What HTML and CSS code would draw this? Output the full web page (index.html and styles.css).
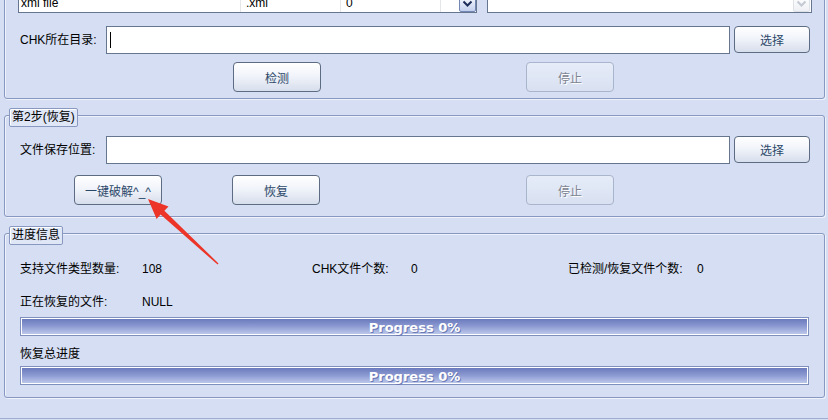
FILE: index.html
```html
<!DOCTYPE html>
<html lang="zh-CN">
<head>
    <meta charset="UTF-8">
    <title>CHK恢复</title>
    <link rel="stylesheet" href="styles.css">
</head>
<body>
    <div class="window">
        <!-- 第1步 (顶部被截掉) -->
        <section class="group group-scan">
            <div class="filelist-row">
                <div class="filelist">
                    <span class="cell c-name">xml file</span>
                    <span class="cell c-ext">.xml</span>
                    <span class="cell c-num">0</span>
                    <span class="cell c-drop">
                        <span class="drop-btn">
                            <svg width="15" height="15" viewBox="0 0 15 15"><path d="M3.5 5.5 L7.5 9.5 L11.5 5.5" fill="none" stroke="#1d2d5a" stroke-width="2"/></svg>
                        </span>
                    </span>
                </div>
                <div class="combo">
                    <span class="drop-btn disabled">
                        <svg width="15" height="15" viewBox="0 0 15 15"><path d="M3.5 5.5 L7.5 9.5 L11.5 5.5" fill="none" stroke="#c4c9d4" stroke-width="2"/></svg>
                    </span>
                </div>
            </div>
            <div class="path-row">
                <span class="label">CHK所在目录:</span>
                <div class="input"><span class="caret"></span></div>
                <button class="btn">选择</button>
            </div>
            <div class="action-row scan-actions">
                <button class="btn wide">检测</button>
                <button class="btn wide" disabled>停止</button>
            </div>
        </section>

        <section class="group group-restore">
            <span class="legend">第2步(恢复)</span>
            <div class="path-row">
                <span class="label">文件保存位置:</span>
                <div class="input"></div>
                <button class="btn">选择</button>
            </div>
            <div class="action-row restore-actions">
                <button class="btn wide">一键破解^_^</button>
                <button class="btn wide">恢复</button>
                <button class="btn wide" disabled>停止</button>
            </div>
        </section>

        <section class="group group-progress">
            <span class="legend">进度信息</span>
            <div class="stats">
                <span>支持文件类型数量:</span>
                <span>108</span>
                <span>CHK文件个数:</span>
                <span>0</span>
                <span>已检测/恢复文件个数:</span>
                <span>0</span>
            </div>
            <div class="current-file">
                <span>正在恢复的文件:</span>
                <span>NULL</span>
            </div>
            <div class="progress first-bar"><span>Progress 0%</span></div>
            <div class="progress-label">恢复总进度</div>
            <div class="progress"><span>Progress 0%</span></div>
        </section>

        <div class="footer"></div>
    </div>

    <!-- 红色箭头标注 -->
    <svg class="annotation" width="828" height="420" viewBox="0 0 828 420">
        <polygon points="148,199 168.5,206.5 164.4,210.8 218.5,263.4 217.6,264.6 160.6,214.6 156.6,219" fill="#ec3528"/>
    </svg>
</body>
</html>
```

FILE: styles.css
```css
body {
    margin: 0;
    background-color: #d5def2;
    font-family: "Liberation Sans", "Noto Sans CJK SC", sans-serif;
    font-size: 12px;
    color: #000;
    overflow: hidden;
    height: 420px;
}

.window {
    position: relative;
    padding-left: 4px;
    width: 821px;
}

.group {
    position: relative;
    border: 1px solid #8898c0;
    border-radius: 3px;
    box-shadow: inset 1px 1px 0 #eef2fb, 1px 1px 0 #eef2fb;
}

.group-scan {
    margin-top: -24px;
    padding: 17px 0 6px 0;
}

.group-restore {
    margin-top: 16px;
    padding: 20px 0 11px 0;
}

.group-progress {
    margin-top: 16px;
    padding: 27px 0 12px 0;
}

.legend {
    position: absolute;
    top: -8px;
    left: 4px;
    height: 17px;
    line-height: 17px;
    padding: 0 2px;
    border: 1px solid #8898c0;
    border-radius: 2px;
    background-color: #dfe6f6;
    box-shadow: inset 1px 1px 0 #fff;
}

/* 文件类型列表 */
.filelist-row {
    display: flex;
    margin-left: 13px;
}

.filelist {
    display: flex;
    width: 457px;
    height: 17px;
    border: 1px solid #66768f;
    background-color: #fff;
}

.cell {
    line-height: 17px;
    border-right: 1px solid #e4e6ea;
    box-sizing: border-box;
}

.c-name {
    width: 222px;
    padding-left: 2px;
}

.c-ext {
    width: 100px;
    padding-left: 5px;
}

.c-num {
    width: 100px;
    padding-left: 5px;
}

.c-drop {
    flex: 1;
    border-right: none;
    display: flex;
    justify-content: flex-end;
}

.combo {
    margin-left: 10px;
    width: 322px;
    height: 17px;
    border: 1px solid #66768f;
    background-color: #fff;
    display: flex;
    justify-content: flex-end;
    padding-right: 1px;
}

.drop-btn {
    width: 15px;
    height: 15px;
    border: 1px solid #7387b5;
    border-radius: 2px;
    background: linear-gradient(#fbfcff, #c3d0ee);
    display: block;
}

.drop-btn svg {
    display: block;
}

.drop-btn.disabled {
    border-color: #dde1e8;
    background: linear-gradient(#fff, #eef0f4);
}

/* 路径输入行 */
.path-row {
    display: grid;
    grid-template-columns: 86px 624px 80px;
    column-gap: 0;
    align-items: start;
    padding-left: 15px;
}

.group-scan .path-row {
    margin-top: 13px;
}

.label {
    line-height: 28px;
}

.input {
    height: 26px;
    border: 1px solid #66768f;
    background-color: #fff;
    display: flex;
    align-items: center;
}

.path-row .btn {
    margin-left: 4px;
}

.caret {
    width: 1px;
    height: 16px;
    margin-left: 3px;
    background-color: #000;
}

.btn {
    height: 27px;
    padding: 0;
    border: 1px solid #5d6c82;
    border-radius: 4px;
    background: linear-gradient(#ffffff, #f1f4fa 45%, #d7deec);
    font-family: inherit;
    font-size: 12px;
    color: #2c4869;
}

.btn.wide {
    width: 88px;
    height: 30px;
}

.btn:disabled {
    border-color: #a9b5cc;
    background: linear-gradient(#e6ecf8, #d8e0f1);
    color: #7d8391;
    text-shadow: 1px 1px 0 #fff;
}

.action-row {
    display: flex;
}

.scan-actions {
    margin-top: 8px;
    padding-left: 228px;
}

.scan-actions .btn + .btn {
    margin-left: 205px;
}

.restore-actions {
    margin-top: 11px;
    padding-left: 69px;
}

.restore-actions .btn:nth-child(2) {
    margin-left: 70px;
}

.restore-actions .btn:nth-child(3) {
    margin-left: 206px;
}

/* 进度信息 */
.stats {
    display: grid;
    grid-template-columns: 122px 170px 99px 157px 129px auto;
    padding-left: 15px;
    line-height: 17px;
}

.current-file {
    display: grid;
    grid-template-columns: 122px auto;
    padding-left: 15px;
    margin-top: 16px;
    line-height: 17px;
}

.progress {
    margin-left: 15px;
    width: 787px;
    height: 17px;
    border: 1px solid #7f8fbe;
    box-shadow: inset 0 0 0 1px #fff;
    background: linear-gradient(#6676ba, #8d9bd2 50%, #c3cdee);
    display: flex;
    align-items: center;
    justify-content: center;
    margin-top: 3px;
}

.first-bar {
    margin-top: 6px;
}

.progress span {
    font-family: "DejaVu Sans", sans-serif;
    font-weight: bold;
    font-size: 13px;
    color: #fff;
    text-shadow: 1px 1px 0 #6a78b4;
    position: relative;
    top: 1px;
}

.progress-label {
    margin-top: 10px;
    padding-left: 15px;
    line-height: 17px;
}

.footer {
    margin-top: 20px;
    margin-left: -4px;
    width: 828px;
    border-top: 1px solid #9fadd0;
    height: 4px;
}

.annotation {
    position: absolute;
    left: 0;
    top: 0;
    pointer-events: none;
}
```
